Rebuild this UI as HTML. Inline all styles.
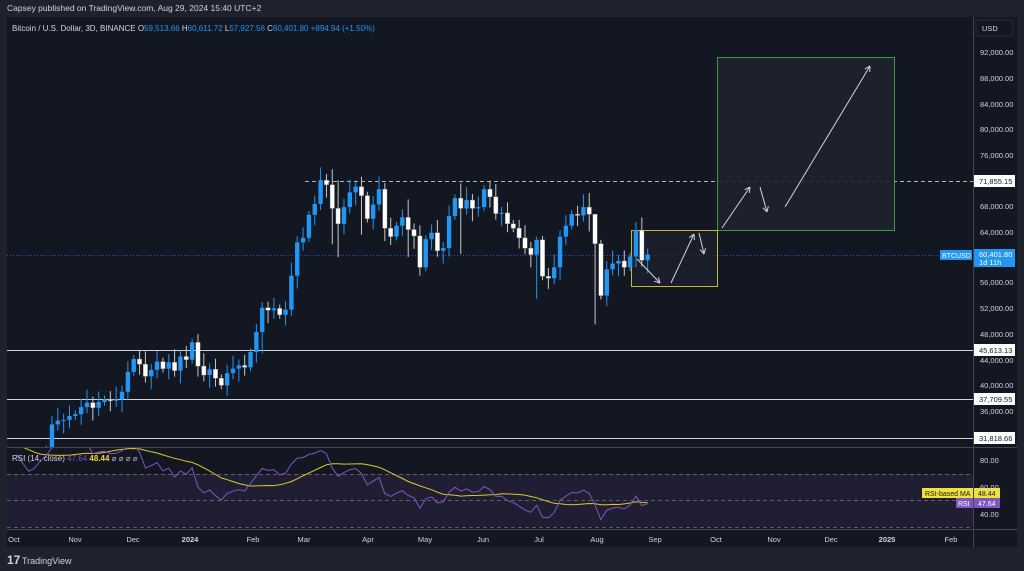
<!DOCTYPE html>
<html><head><meta charset="utf-8">
<style>
html,body{margin:0;padding:0;background:#1e222d;width:1024px;height:571px;overflow:hidden;font-family:"Liberation Sans",sans-serif;}
svg text{font-family:"Liberation Sans",sans-serif;}
</style></head><body>
<svg id="s" width="1024" height="571" xmlns="http://www.w3.org/2000/svg">
<rect x="0" y="0" width="1024" height="571" fill="#1e222d"/>
<text x="7" y="11" fill="#d1d4dc" font-size="8.5">Capsey published on TradingView.com, Aug 29, 2024 15:40 UTC+2</text>
<rect x="7" y="17" width="1010" height="530" fill="#131722"/>
<rect x="7" y="474" width="966" height="53" fill="#1f1e33"/>
<g id="g"></g>
<line x1="7" y1="447.5" x2="1017" y2="447.5" fill="none" stroke="#434651" stroke-width="1"/>
<line x1="7" y1="529.5" x2="1017" y2="529.5" stroke="#434651"/>
<line x1="973.5" y1="17" x2="973.5" y2="547" stroke="#434651"/>
<text x="12" y="31" fill="#d1d4dc" font-size="8">Bitcoin / U.S. Dollar, 3D, BINANCE  O<tspan fill="#2196f3">59,513.66</tspan>  H<tspan fill="#2196f3">60,611.72</tspan>  L<tspan fill="#2196f3">57,927.56</tspan>  C<tspan fill="#2196f3">60,401.80</tspan>  <tspan fill="#2196f3">+894.94 (+1.50%)</tspan></text>
<text x="12" y="461" fill="#d1d4dc" font-size="8">RSI (14, close) <tspan fill="#7e57c2">47.64</tspan> <tspan fill="#f0d23a" font-weight="bold">48.44</tspan> <tspan fill="#b2b5be">⌀ ⌀ ⌀ ⌀</tspan></text>
<rect x="976" y="20" width="37" height="16" rx="2" fill="#131722" stroke="#2a2e39"/>
<text x="982" y="31" fill="#d1d4dc" font-size="7.5">USD</text>
<g fill="#d1d4dc" font-size="7.5" id="ax"></g>
<text x="7" y="564" fill="#d1d4dc" font-size="12" font-weight="bold">17</text>
<text x="22" y="564" fill="#d1d4dc" font-size="9">TradingView</text>
</svg>
<script>
var NS="http://www.w3.org/2000/svg",g=document.getElementById('g'),ax=document.getElementById('ax');
function el(t,a,p,txt){var e=document.createElementNS(NS,t);for(var k in a)e.setAttribute(k,a[k]);if(txt!=null)e.textContent=txt;(p||g).appendChild(e);return e;}
function Y(p){return 52+(92-p)*6.41;}
function XC(i){return 14+(i+0.5)*5.84;}
var c=[27.6,27.2,26.8,27.2,28.6,30,33.9,34.5,34.6,35.2,35.5,36.6,37.3,36.5,37.4,37.8,37.6,37.8,39.0,42.1,44.1,43.3,41.4,42.4,43.7,42.6,43.6,42.3,44.5,44.0,46.7,43.0,41.6,42.5,41.1,40.0,41.9,42.6,43.1,42.8,45.2,48.3,52.1,51.7,52.0,51.0,51.8,57.1,62.3,63.0,66.6,68.3,72.0,71.3,67.6,65.2,67.8,70.1,71.0,69.6,66.0,68.2,70.6,64.5,63.2,64.9,66.2,64.3,63.3,58.4,62.8,63.8,61.0,61.4,66.4,69.2,67.6,68.9,67.6,67.8,70.6,69.4,66.8,66.9,65.2,64.5,63.0,61.4,60.4,62.7,57.0,56.7,58.4,63.2,64.9,66.7,66.5,67.8,66.7,62.1,54.0,58.1,59.0,59.4,58.4,60.1,64.2,59.5,60.4];
var ex={42:[53,45],67:[69,60],98:[70,64],99:[66,49.5],89:[63.2,53.5],76:[71.5,60.5],54:[73.7,62],55:[72,60],59:[72.5,63.5]};
el('line',{x1:305,y1:181.5,x2:973,y2:181.5,stroke:'#b2b5be','stroke-dasharray':'4 3'});
[350.5,399.5,438.5].forEach(function(y){el('line',{x1:7,y1:y,x2:973,y2:y,stroke:'#d1d4dc'});});
el('line',{x1:7,y1:255.5,x2:973,y2:255.5,stroke:'#2962ff','stroke-dasharray':'1 2','stroke-opacity':.8});
el('rect',{x:717.5,y:57.5,width:177,height:173,fill:'#1e222d','fill-opacity':.9,stroke:'#3a9a3a'});
el('rect',{x:631.5,y:230.5,width:86,height:56,fill:'#1e222d','fill-opacity':.7,stroke:'#c8b82a'});
var clip=el('clipPath',{id:'cp'});el('rect',{x:7,y:17,width:966,height:430},clip);
var clip2=el('clipPath',{id:'cp2'});el('rect',{x:7,y:448,width:966,height:81},clip2);
var cg=el('g',{'clip-path':'url(#cp)'});
var prev=27.3;
for(var i=0;i<c.length;i++){
 var x=XC(i),o=prev,cl=c[i];var hi=Math.max(o,cl)+0.6+((i*7)%5)*0.35,lo=Math.min(o,cl)-0.6-((i*3)%5)*0.35;
 if(ex[i]){hi=ex[i][0];lo=ex[i][1];}
 var up=cl>=o,col=up?'#2196f3':'#ffffff';
 el('line',{x1:x,y1:Y(hi),x2:x,y2:Y(lo),stroke:up?'#2196f3':'#c8c8c8'},cg);
 var t=Y(Math.max(o,cl)),b=Y(Math.min(o,cl));
 el('rect',{x:x-2.2,y:t,width:4.4,height:Math.max(1,b-t),fill:col,stroke:up?'none':'#888','stroke-width':.4},cg);
 prev=cl;
}
function arr(x1,y1,x2,y2){el('line',{x1:x1,y1:y1,x2:x2,y2:y2,stroke:'#d1d4dc','stroke-width':1});var a=Math.atan2(y2-y1,x2-x1),L=6;
 [0.5,-0.5].forEach(function(d){el('line',{x1:x2,y1:y2,x2:x2-L*Math.cos(a+d),y2:y2-L*Math.sin(a+d),stroke:'#d1d4dc'});});}
arr(637,259,660,283);arr(671,283,694,234);arr(699,233,704,254);
arr(722,228,750,187);arr(760,187,767,212);arr(785,207,870,66);
[[92,52],[88,78],[84,104],[80,129],[76,155],[68,206],[64,232],[56,282],[52,308],[48,334],[44,360],[40,385],[36,411]].forEach(function(a){el('text',{x:980,y:a[1]+3},ax,a[0]+',000.00');});
[['71,855.15',181],['45,613.13',350],['37,709.55',399],['31,818.66',438]].forEach(function(a){el('rect',{x:974,y:a[1]-6,width:41,height:12,fill:'#fff'});el('text',{x:979,y:a[1]+3,fill:'#131722'},ax,a[0]);});
el('rect',{x:974,y:249,width:41,height:18,fill:'#2196f3'});
el('text',{x:979,y:257,fill:'#fff'},ax,'60,401.80');el('text',{x:979,y:265,fill:'#fff'},ax,'1d 11h');
el('rect',{x:940,y:250,width:32,height:10,fill:'#2196f3'});el('text',{x:942,y:258,fill:'#fff','font-size':7},ax,'BTCUSD');
[['80.00',460],['60.00',487],['40.00',514]].forEach(function(a){el('text',{x:980,y:a[1]+3},ax,a[0]);});
[['Oct',14],['Nov',75],['Dec',133],['2024',190],['Feb',253],['Mar',304],['Apr',368],['May',425],['Jun',483],['Jul',539],['Aug',597],['Sep',655],['Oct',716],['Nov',774],['Dec',831],['2025',887],['Feb',951]].forEach(function(a){el('text',{x:a[1],y:542,'text-anchor':'middle','font-weight':a[0].length==4?'bold':'normal'},ax,a[0]);});
[474.5,500.5,527.5].forEach(function(y){el('line',{x1:7,y1:y,x2:973,y2:y,stroke:'#787b86','stroke-dasharray':'4 3','stroke-opacity':.7});});
var all=[24,24.5,25,25.5,26,25.8,26.5,26.9,26.7,27.0,26.8,26.9,27.5,27.8].concat(c),ag=0,al=0,rsi=[];
for(var j=1;j<all.length;j++){var d=all[j]-all[j-1],gn=Math.max(d,0),ls=Math.max(-d,0);if(j<=14){ag+=gn/14;al+=ls/14;}else{ag=(ag*13+gn)/14;al=(al*13+ls)/14;}rsi.push(100-100/(1+ag/(al||1e-6)));}
var off=all.length-c.length-1;
function RY(r){return 500.7-(r-50)*1.33;}
var p1='',p2='';
for(var i=0;i<c.length;i++){var r=rsi[i+off],x=XC(i);p1+=(i?'L':'M')+x.toFixed(1)+' '+RY(r).toFixed(1);
 var s=0;for(var k=0;k<14;k++)s+=rsi[Math.max(0,i+off-k)];p2+=(i?'L':'M')+x.toFixed(1)+' '+RY(s/14).toFixed(1);}
var rg=el('g',{'clip-path':'url(#cp2)'});
el('path',{d:p2,fill:'none',stroke:'#e0c82a','stroke-width':1},rg);
el('path',{d:p1,fill:'none',stroke:'#7e57c2','stroke-width':1},rg);
el('rect',{x:922,y:488,width:51,height:10,fill:'#f0e23a'});el('text',{x:925,y:496,fill:'#131722','font-size':7},ax,'RSI-based MA');
el('rect',{x:974,y:488,width:26,height:10,fill:'#f0e23a'});el('text',{x:978,y:496,fill:'#131722','font-size':7},ax,'48.44');
el('rect',{x:956,y:498,width:17,height:10,fill:'#7e57c2'});el('text',{x:958,y:506,fill:'#fff','font-size':7},ax,'RSI');
el('rect',{x:974,y:498,width:26,height:10,fill:'#7e57c2'});el('text',{x:978,y:506,fill:'#fff','font-size':7},ax,'47.64');
</script>
</body></html>
